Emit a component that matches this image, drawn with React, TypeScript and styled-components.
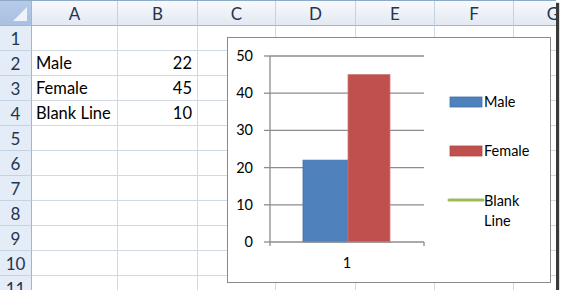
import React from "react";
import styled, { createGlobalStyle } from "styled-components";

const GlobalStyle = createGlobalStyle`
  html, body {
    margin: 0;
    padding: 0;
    background: #ffffff;
  }
  body {
    font-family: Lato, "Open Sans", "Liberation Sans", sans-serif;
  }
`;

const COLS = [
  { name: "A", width: 86 },
  { name: "B", width: 80 },
  { name: "C", width: 78 },
  { name: "D", width: 80 },
  { name: "E", width: 79 },
  { name: "F", width: 79 },
  { name: "G", width: 79 },
];

const ROWS = 11;

const DATA: { [row: number]: { label: string; value: number } } = {
  2: { label: "Male", value: 22 },
  3: { label: "Female", value: 45 },
  4: { label: "Blank Line", value: 10 },
};

const GRID_TEMPLATE = `32px ${COLS.map((c) => c.width + "px").join(" ")}`;

function App() {
  const rows = Array.from({ length: ROWS }, (_, i) => i + 1);

  return (
    <>
      <GlobalStyle />
      <Frame>
        <Sheet>
          <Corner>
            <CornerTriangle />
          </Corner>
          {COLS.map((c) => (
            <ColHeader key={c.name}>{c.name}</ColHeader>
          ))}
          {rows.map((r) => (
            <React.Fragment key={r}>
              <RowHeader>{r}</RowHeader>
              {COLS.map((c, ci) => (
                <Cell key={c.name} $align={ci === 1 ? "right" : "left"}>
                  {ci === 0 && DATA[r] ? DATA[r].label : null}
                  {ci === 1 && DATA[r] ? DATA[r].value : null}
                </Cell>
              ))}
            </React.Fragment>
          ))}
        </Sheet>
        <ChartBox>
          <ColumnChart />
        </ChartBox>
      </Frame>
    </>
  );
}

function ColumnChart() {
  const axisX = 42;
  const plotRight = 196;
  const zeroY = 204;
  const step = 37.2;
  const y = (v: number) => zeroY - (v / 10) * step;
  const ticks = [0, 10, 20, 30, 40, 50];

  return (
    <svg width="322" height="244" viewBox="0 0 322 244">
      {ticks.map((t) => (
        <g key={t}>
          {t > 0 && (
            <line
              x1={axisX}
              x2={plotRight}
              y1={y(t)}
              y2={y(t)}
              stroke="#8c8c8c"
              strokeWidth="1.3"
            />
          )}
          <line
            x1={axisX - 6}
            x2={axisX}
            y1={y(t)}
            y2={y(t)}
            stroke="#8c8c8c"
            strokeWidth="1.3"
          />
          <AxisText x={25} y={y(t) + 5} textAnchor="end">
            {t}
          </AxisText>
        </g>
      ))}

      <rect x="75" y={y(22)} width="45" height={zeroY - y(22)} fill="#4f81bd" stroke="#3f6fae" strokeWidth="0.8" />
      <rect x="120" y={y(45)} width="42" height={zeroY - y(45)} fill="#c0504d" stroke="#d07a78" strokeWidth="0.8" />

      <line x1={axisX} x2={axisX} y1={y(50)} y2={zeroY + 4} stroke="#8c8c8c" strokeWidth="1.3" />
      <line x1={axisX} x2={plotRight} y1={zeroY} y2={zeroY} stroke="#8c8c8c" strokeWidth="1.3" />
      <line x1={plotRight} x2={plotRight} y1={zeroY} y2={zeroY + 4} stroke="#8c8c8c" strokeWidth="1.3" />
      <AxisText x={119} y={230} textAnchor="middle">
        1
      </AxisText>

      <rect x="222" y="59" width="32" height="10" fill="#4f81bd" stroke="#3f6fae" strokeWidth="0.8" />
      <AxisText x={256} y={69}>Male</AxisText>

      <rect x="222" y="108" width="32" height="10" fill="#c0504d" stroke="#b04744" strokeWidth="0.8" />
      <AxisText x={256} y={118}>Female</AxisText>

      <line x1="221" x2="255" y1="162" y2="162" stroke="#9bbb59" strokeWidth="3" strokeLinecap="round" />
      <AxisText x={256} y={168}>Blank</AxisText>
      <AxisText x={256} y={188}>Line</AxisText>
    </svg>
  );
}

const Frame = styled.div`
  position: relative;
  width: 556px;
  height: 290px;
  overflow: hidden;
  box-shadow: 3px 3px 1px #3a3a3a;
  background: #ffffff;
`;

const Sheet = styled.div`
  display: grid;
  grid-template-columns: ${GRID_TEMPLATE};
  grid-auto-rows: 25px;
  width: max-content;
  border-top: 1px solid #8fa9c9;
  box-sizing: border-box;
`;

const Corner = styled.div`
  position: relative;
  background: linear-gradient(#b6cbe8, #a9c0e2);
  border-right: 1px solid #9eb6ce;
  border-bottom: 1px solid #9eb6ce;
  box-sizing: border-box;
`;

const CornerTriangle = styled.div`
  position: absolute;
  right: 4px;
  bottom: 4px;
  width: 0;
  height: 0;
  border-left: 14px solid transparent;
  border-bottom: 14px solid #eef3fa;
`;

const ColHeader = styled.div`
  display: flex;
  align-items: center;
  justify-content: center;
  background: linear-gradient(#f7f9fc, #e3e9f2);
  border-right: 1px solid #c5d2e3;
  border-bottom: 1px solid #9eb6ce;
  box-sizing: border-box;
  color: #1f3552;
  font-size: 17px;
`;

const RowHeader = styled.div`
  display: flex;
  align-items: center;
  justify-content: center;
  background: #e4ecf7;
  border-right: 1px solid #9eb6ce;
  border-bottom: 1px solid #c5d2e3;
  box-sizing: border-box;
  color: #1f3552;
  font-size: 17px;
`;

const Cell = styled.div<{ $align: "left" | "right" }>`
  display: flex;
  align-items: center;
  justify-content: ${(p) => (p.$align === "right" ? "flex-end" : "flex-start")};
  padding: 0 5px 0 4px;
  border-right: 1px solid #d0d7e5;
  border-bottom: 1px solid #d0d7e5;
  box-sizing: border-box;
  color: #000000;
  font-size: 16.5px;
  white-space: nowrap;
`;

const ChartBox = styled.div`
  position: absolute;
  left: 227px;
  top: 37px;
  width: 322px;
  height: 244px;
  background: #ffffff;
  border: 1.5px solid #8a8a8a;
`;

const AxisText = styled.text`
  font-family: Lato, "Open Sans", "Liberation Sans", sans-serif;
  font-size: 14.5px;
  fill: #000000;
`;

export default App;
